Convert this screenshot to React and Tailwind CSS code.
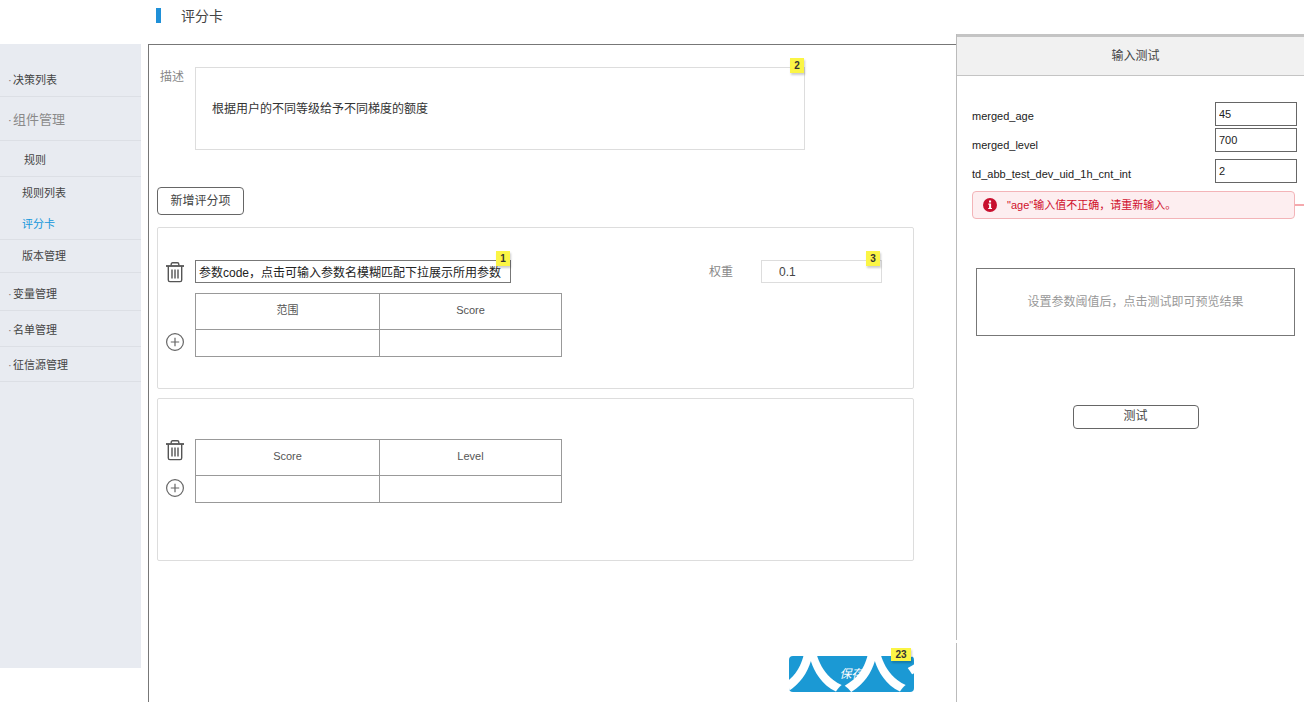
import React, { useState } from "react";

const menu = [
  { label: "决策列表", row: "h-[53px] pt-5 pl-2 border-b", dot: true, text: "text-[11px] text-[#444]" },
  { label: "组件管理", row: "h-11 pt-[2px] pl-2 border-b", dot: true, text: "text-[13px] text-[#8a8a8a]" },
  { label: "规则", row: "h-9 pl-6 pt-[2px] border-b", text: "text-[11px] text-[#444]" },
  { label: "规则列表", row: "h-8 pl-[22px]", text: "text-[11px] text-[#444]" },
  { label: "评分卡", row: "h-[31px] pl-[22px] border-b", text: "text-[11px] text-[#1296db]", current: true },
  { label: "版本管理", row: "h-[33px] pl-[22px] border-b", text: "text-[11px] text-[#444]" },
  { label: "变量管理", row: "h-[38px] pl-2 pt-1 border-b", dot: true, text: "text-[11px] text-[#444]" },
  { label: "名单管理", row: "h-9 pl-2 pt-[2px] border-b", dot: true, text: "text-[11px] text-[#444]" },
  { label: "征信源管理", row: "h-[35px] pl-2 pt-[2px] border-b", dot: true, text: "text-[11px] text-[#444]" },
];

function Sidebar() {
  return (
    <nav className="mt-11 min-h-[624px] w-[141px] shrink-0 self-start bg-[#e8ebf1]">
      <ul>
        {menu.map((m) => (
          <li key={m.label} className={"flex items-center border-[#dcdfe5] " + m.row}>
            {m.dot && <span className="w-[5px] text-[11px] leading-4 text-[#777]">·</span>}
            <a href="#" aria-current={m.current ? "page" : undefined} className={"leading-4 " + m.text}>
              {m.label}
            </a>
          </li>
        ))}
      </ul>
    </nav>
  );
}

function Badge({ children, className }) {
  return (
    <span
      className={
        "absolute flex items-center justify-center bg-[#fbf545] text-[10px] leading-none font-bold text-[#333] shadow-[1px_2px_2px_rgba(0,0,0,0.2)] " +
        className
      }
    >
      {children}
    </span>
  );
}

function TrashButton() {
  return (
    <button type="button" aria-label="删除" className="block h-[22px] w-[18px]">
      <svg viewBox="0 0 18 22" className="h-[22px] w-[18px]" fill="none" stroke="#555" strokeWidth="1.4">
        <path d="M0 5h18" strokeWidth="1.8" />
        <path d="M5.2 4.6V3.2c0-.9.6-1.4 1.4-1.4h4.8c.8 0 1.4.5 1.4 1.4v1.4" />
        <path d="M2.3 5v14c0 1 .6 1.6 1.6 1.6h10.200c1 0 1.600-.6 1.600-1.600V5" />
        <path d="M6 8.500v9M9 8.500v9M12 8.500v9" />
      </svg>
    </button>
  );
}

function AddButton() {
  return (
    <button type="button" aria-label="添加" className="block h-[18px] w-[18px]">
      <svg viewBox="0 0 18 18" className="h-[18px] w-[18px]" fill="none" stroke="#666" strokeWidth="1.2">
        <circle cx="9" cy="9" r="8.4" />
        <path d="M9 4.8v8.4M4.8 9h8.4" />
      </svg>
    </button>
  );
}

function ScoreTable({ head }) {
  return (
    <table className="w-[367px] table-fixed border-collapse text-[11px] text-[#555]">
      <thead>
        <tr className="h-9">
          {head.map((h, i) => (
            <th key={h} scope="col" className={"border border-[#999] pb-[2px] font-normal " + (i === 0 ? "w-[184px]" : "")}>
              {h}
            </th>
          ))}
        </tr>
      </thead>
      <tbody>
        <tr className="h-[27px]">
          <td className="border border-[#999]" />
          <td className="border border-[#999]" />
        </tr>
      </tbody>
    </table>
  );
}

function Editor() {
  const [desc, setDesc] = useState("根据用户的不同等级给予不同梯度的额度");
  return (
    <main className="ml-[7px] flex min-w-0 flex-1 flex-col">
      <header className="flex h-11 items-start gap-5 pt-2 pl-2">
        <span className="h-[15px] w-[5px] bg-[#1f90d8]" />
        <h1 className="text-[14px] leading-4 text-[#444]">评分卡</h1>
      </header>
      <div className="flex-1 border-t border-l border-[#777] pt-[22px] pr-[42px] pb-2 pl-2">
        <div className="flex items-start">
          <label htmlFor="desc" className="w-[38px] shrink-0 pt-[2px] pl-[3px] text-[12px] leading-4 text-[#888]">
            描述
          </label>
          <div className="relative w-full max-w-[610px]">
            <textarea
              id="desc"
              value={desc}
              onChange={(e) => setDesc(e.target.value)}
              className="block h-[83px] w-full resize-none border border-[#ddd] px-4 pt-[31px] text-[12px] leading-5 text-[#333]"
            />
            <Badge className="-top-[9px] right-[1px] h-[15px] w-[14px]">2</Badge>
          </div>
        </div>

        <button
          type="button"
          className="mt-[37px] block h-7 w-[87px] rounded border border-[#666] text-[12px] leading-4 text-[#444]"
        >
          新增评分项
        </button>

        <section className="mt-3 h-[162px] rounded-xs border border-[#ddd] pt-8 pr-[31px] pl-2">
          <div className="flex items-center">
            <div className="w-[29px] shrink-0">
              <TrashButton />
            </div>
            <div className="relative">
              <input
                aria-label="参数code"
                defaultValue="参数code，点击可输入参数名模糊匹配下拉展示所用参数"
                className="block h-[23px] w-[316px] border border-[#777] px-[3px] text-[12px] text-[#222]"
              />
              <Badge className="-top-[9px] right-[1px] h-[15px] w-[14px]">1</Badge>
            </div>
            <div className="ml-auto flex items-center gap-7">
              <label htmlFor="weight" className="text-[12px] leading-4 text-[#888]">
                权重
              </label>
              <div className="relative">
                <input
                  id="weight"
                  defaultValue="0.1"
                  className="block h-[23px] w-[121px] border border-[#ddd] px-[17px] text-[12px] text-[#444]"
                />
                <Badge className="-top-[9px] right-[2px] h-[15px] w-[14px]">3</Badge>
              </div>
            </div>
          </div>
          <div className="mt-[10px] flex items-end">
            <div className="w-[29px] shrink-0 pb-[6px]">
              <AddButton />
            </div>
            <ScoreTable head={["范围", "Score"]} />
          </div>
        </section>

        <section className="mt-[9px] h-[163px] rounded-xs border border-[#ddd] pt-10 pl-2">
          <div className="flex items-stretch">
            <div className="flex w-[29px] shrink-0 flex-col justify-between pb-[6px]">
              <TrashButton />
              <AddButton />
            </div>
            <ScoreTable head={["Score", "Level"]} />
          </div>
        </section>

        <div className="mt-[95px] flex justify-end">
          <div className="relative">
            <button
              type="button"
              className="relative block h-9 w-[125px] overflow-hidden rounded bg-[#1b99d4] text-[12px] text-white italic"
            >
              保存
              <span
                aria-hidden="true"
                className="absolute -top-6 -left-[10px] text-[64px] leading-none font-bold whitespace-nowrap text-white not-italic"
              >
                人人都
              </span>
            </button>
            <Badge className="-top-2 right-[3px] h-[13px] w-5">23</Badge>
          </div>
        </div>
      </div>
    </main>
  );
}

const params = [
  { id: "merged_age", value: "45", gap: "" },
  { id: "merged_level", value: "700", gap: "mt-[2px]" },
  { id: "td_abb_test_dev_uid_1h_cnt_int", value: "2", gap: "mt-[7px]" },
];

function TestPanel() {
  return (
    <aside className="mt-[34px] flex w-[348px] shrink-0 flex-col">
      <div className="flex min-h-[606px] flex-col border-l border-[#bbb]">
        <h2 className="flex h-[42px] items-center justify-center border-t-3 border-b border-[#c4c4c4] bg-[#f1f1f1] pl-[10px] text-[12px] leading-4 font-normal text-[#444]">
          输入测试
        </h2>
        <div className="flex items-start justify-between pt-[26px] pr-[7px] pl-[15px]">
          <div className="flex flex-col text-[11px] text-[#222]">
            {params.map((p) => (
              <label key={p.id} htmlFor={p.id} className="flex h-[29px] items-center">
                {p.id}
              </label>
            ))}
          </div>
          <div className="flex flex-col">
            {params.map((p) => (
              <input
                key={p.id}
                id={p.id}
                defaultValue={p.value}
                className={"block h-6 w-[82px] border border-[#666] px-[3px] text-[11px] text-[#222] " + p.gap}
              />
            ))}
          </div>
        </div>
        <div className="mt-[2px] flex items-center pl-[15px]">
          <div
            role="alert"
            className="flex h-7 flex-1 items-center gap-[10px] rounded border border-[#f3b4b8] bg-[#fdeef0] pl-[10px] text-[11px] text-[#d0102c]"
          >
            <svg viewBox="0 0 14 14" className="h-[14px] w-[14px] shrink-0">
              <circle cx="7" cy="7" r="7" fill="#c8102e" />
              <path d="M6 2.6h2.1v1.8H6zM5.3 5.6h2.8v4.3h.9V11H5.200V9.900h.9V6.700h-.8z" fill="#fff" />
            </svg>
            <span>"age"输入值不正确，请重新输入。</span>
          </div>
          <span className="h-[2px] w-[9px] bg-[#f5a9ad]" />
        </div>
        <div className="mt-[49px] mr-[9px] ml-[19px] flex h-[68px] items-center justify-center border border-[#777] text-[12px] text-[#999]">
          设置参数阈值后，点击测试即可预览结果
        </div>
        <button
          type="button"
          className="mt-[69px] mr-[-10px] h-6 w-[126px] self-center rounded border border-[#666] pb-[2px] text-[12px] leading-4 text-[#444]"
        >
          测试
        </button>
      </div>
      <div className="mt-[3px] flex-1 border-l border-[#bbb]" />
    </aside>
  );
}

export default function App() {
  return (
    <div className="flex min-h-screen bg-white font-['Liberation_Sans','Noto_Sans_CJK_SC',sans-serif]">
      <Sidebar />
      <Editor />
      <TestPanel />
    </div>
  );
}
